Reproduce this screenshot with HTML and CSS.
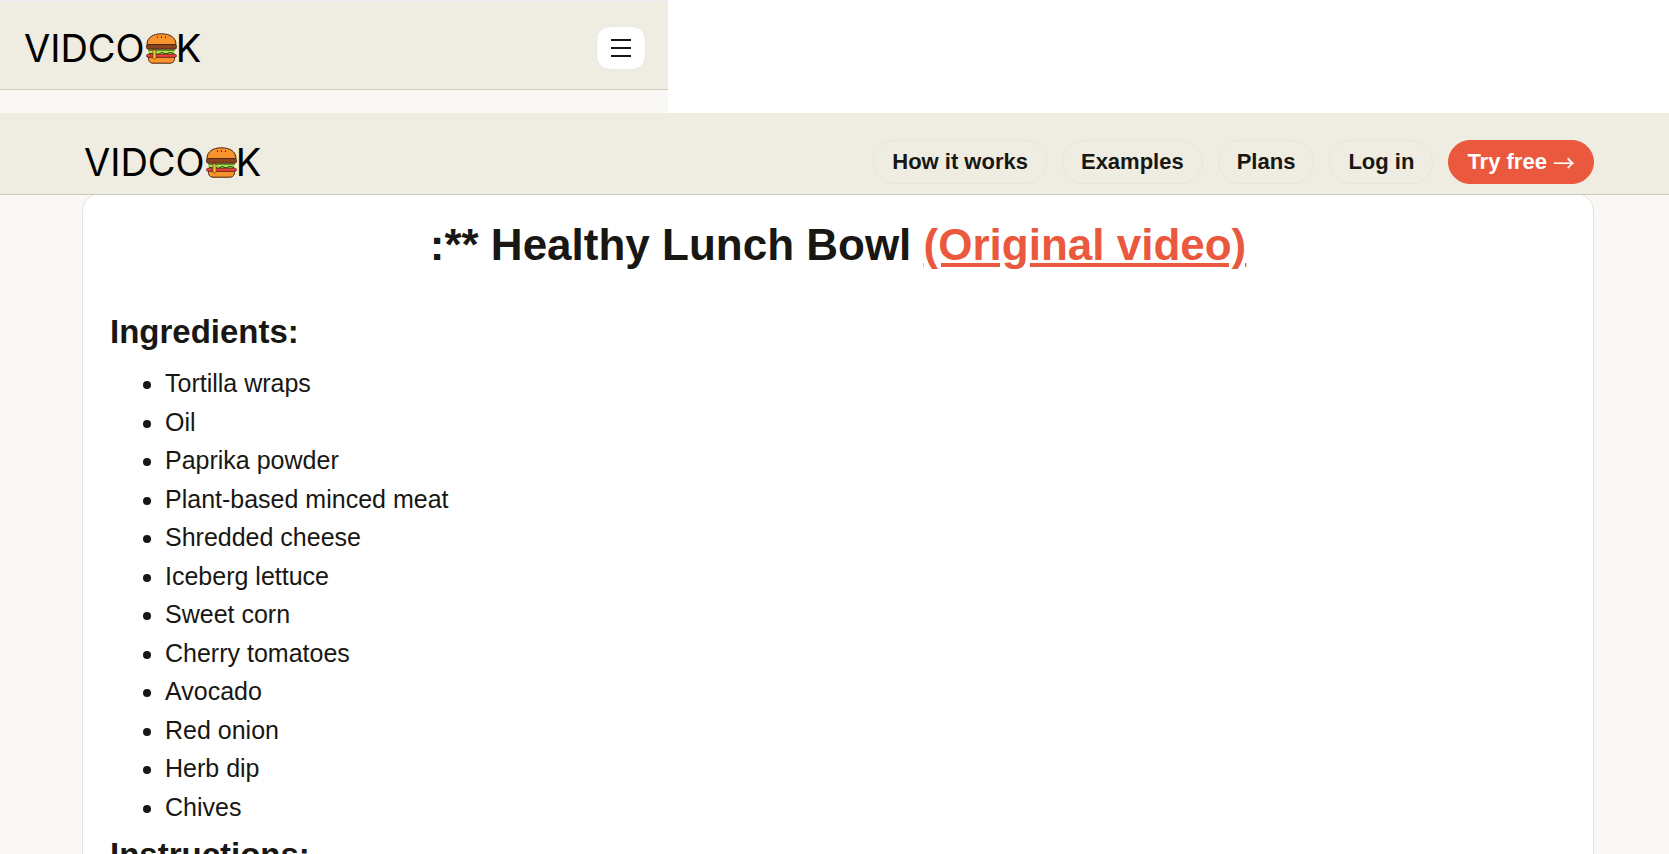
FILE: index.html
```html
<!DOCTYPE html>
<html lang="en">
<head>
  <meta charset="UTF-8" />
  <meta name="viewport" content="width=device-width, initial-scale=1.0" />
  <title>VIDCOOK - Healthy Lunch Bowl</title>
  <link rel="stylesheet" href="styles.css">
</head>
<body>
  <!-- Burger used in both logos -->
  <svg class="sprite" aria-hidden="true">
    <symbol id="burger" viewBox="0 0 31 31">
      <path d="M1 11.500C1 4.500 7 .8 15.500 .8S30 4.500 30 11.500Z" fill="#f8922d" stroke="#4a2510" />
      <path d="M2.500 24H28.500C29 28 27 30.200 24 30.200H7C4 30.200 2 28 2.500 24Z" fill="#f8922d" stroke="#4a2510" />
      <rect x="2.500" y="16.500" width="26" height="5.500" fill="#a9e34b" />
      <path d="M2 17H29M3 20l3 1 3-1 3 1.500 4-2 4 1.500 4-1.500 4 1" fill="none" stroke="#24390f" />
      <rect x=".5" y="21.300" width="30" height="3" rx="1.500" fill="#e8423b" stroke="#601b18" stroke-width=".7" />
      <rect x=".5" y="11.500" width="30" height="4.500" rx="1.500" fill="#8b431c" stroke="#4a2510" stroke-width=".8" />
      <path d="M6 17h4v7.500a1.500 1.500 0 0 1-3 0V19Z" fill="#f5c52d" stroke="#59440f" stroke-width=".7" />
      <path d="M11.500 5v-1.500M15.500 5v-1.500M19.500 5v-1.500" stroke="#4a2510" />
    </symbol>
  </svg>

  <header class="mobile-header">
    <a class="logo" href="#" aria-label="VIDCOOK">VIDCO<svg class="burger"><use href="#burger" /></svg>K</a>
    <button class="menu-btn" aria-label="Menu">
      <svg width="20" height="20" viewBox="0 0 20 20"><path d="M0 2h20M0 10h20M0 18h20" stroke="#171717" stroke-width="2" /></svg>
    </button>
  </header>

  <header class="header">
    <a class="logo" href="#" aria-label="VIDCOOK">VIDCO<svg class="burger"><use href="#burger" /></svg>K</a>
    <nav class="nav">
      <a href="#">How it works</a>
      <a href="#">Examples</a>
      <a href="#">Plans</a>
      <a href="#">Log in</a>
      <a class="cta" href="#">Try free <span class="arrow">→</span></a>
    </nav>
  </header>

  <main class="page">
    <article class="card">
      <h1>:** Healthy Lunch Bowl <a href="#">(Original video)</a></h1>
      <h2>Ingredients:</h2>
      <ul>
        <li>Tortilla wraps</li>
        <li>Oil</li>
        <li>Paprika powder</li>
        <li>Plant-based minced meat</li>
        <li>Shredded cheese</li>
        <li>Iceberg lettuce</li>
        <li>Sweet corn</li>
        <li>Cherry tomatoes</li>
        <li>Avocado</li>
        <li>Red onion</li>
        <li>Herb dip</li>
        <li>Chives</li>
      </ul>
      <h2>Instructions:</h2>
    </article>
  </main>
</body>
</html>
```
FILE: styles.css
```css
* {
  box-sizing: border-box;
}
body {
  margin: 0;
  background: #fff;
  color: #181713;
  font-family: "Liberation Sans", Arial, sans-serif;
  font-size: 25px;
  line-height: 1.54;
}
.sprite {
  display: none;
}

/* Headers */
.mobile-header {
  display: flex;
  align-items: center;
  justify-content: space-between;
  width: 40%;
  height: 90px;
  margin-bottom: 23px;
  padding: 6px 22px 0 24px;
  background: #efece1;
  border-top: 1px solid #eceaf0;
  border-bottom: 1px solid #d0cdc0;
  box-shadow: 0 23px 0 #f9f8f4;
}
.header {
  position: relative;
  z-index: 1;
  display: flex;
  align-items: center;
  justify-content: space-between;
  padding: 27px 75px 10px 84px;
  background: #efece1;
  border-bottom: 1px solid #cbc9bb;
}
.logo {
  display: flex;
  align-items: center;
  color: #000;
  font-family: Inter, sans-serif;
  font-size: 38px;
  font-weight: 400;
  line-height: 44px;
  text-decoration: none;
}
.burger {
  width: 31px;
  height: 31px;
  margin: 0 -1px 0 1px;
}
.menu-btn {
  display: flex;
  align-items: center;
  justify-content: center;
  width: 50px;
  height: 44px;
  padding: 0;
  background: #fff;
  border: 1px solid #e8e6df;
  border-radius: 14px;
}
.nav {
  display: flex;
  gap: 15px;
}
.nav a {
  padding: 0 18px;
  border: 1px solid #e8e5da;
  border-radius: 22px;
  color: #181713;
  font-size: 22px;
  font-weight: bold;
  line-height: 42px;
  text-decoration: none;
}
.nav .cta {
  background: #ea593d;
  border-color: #ea593d;
  color: #fff;
}
.arrow {
  font-family: "Noto Sans CJK JP", sans-serif;
  font-weight: normal;
  line-height: 1;
  vertical-align: -2px;
}

/* Recipe */
.page {
  padding: 0 75px 0 82px;
  background: #f9f8f4;
}
.card {
  position: relative;
  top: -2px;
  padding: 16px 27px;
  background: #fff;
  border: 1px solid #e2e1dd;
  border-radius: 18px;
}
h1 {
  margin: 0 0 26px;
  font-size: 44px;
  line-height: 70px;
  text-align: center;
}
h1 a {
  color: #ea593d;
}
h2 {
  margin: 0;
  font-size: 33px;
  line-height: 52px;
}
ul {
  margin: 6px 0 3px;
  padding-left: 55px;
}
```
